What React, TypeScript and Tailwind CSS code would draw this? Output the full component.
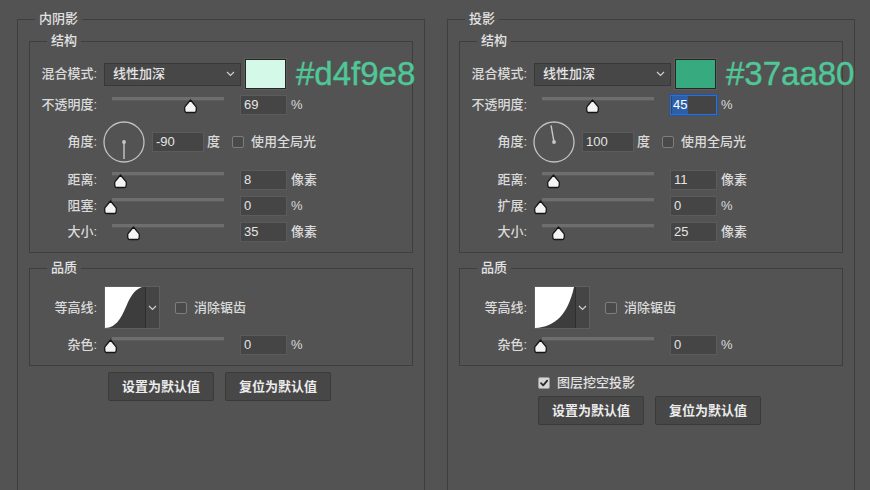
import React from "react";

const FONT = { fontFamily: '"Liberation Sans", "Noto Sans CJK SC", sans-serif' };

function Thumb({ x }: { x: number }) {
  return (
    <svg
      width="15"
      height="15"
      viewBox="0 0 15 15"
      className="absolute top-[4px]"
      style={{ left: x - 7.5 }}
    >
      <path
        d="M7.5 1 L13.2 7.8 Q13.8 13.5 11.5 13.5 L3.5 13.5 Q1.2 13.5 1.8 7.8 Z"
        fill="#f4f4f4"
        stroke="#151515"
        strokeWidth="1.3"
        strokeLinejoin="round"
      />
    </svg>
  );
}

function Slider({ x }: { x: number }) {
  return (
    <div className="relative h-[20px] w-[128px] ml-[7px] shrink-0">
      <div className="absolute left-[8px] top-[2px] h-[4px] w-[112px] bg-[#6e6e6e] border-b border-[#5c5c5c]" />
      <Thumb x={x} />
    </div>
  );
}

function Label({ children }: { children: React.ReactNode }) {
  return (
    <div className="w-[67px] shrink-0 text-right text-[13px] text-[#dadada] leading-[20px] whitespace-nowrap">
      {children}
    </div>
  );
}

function Input({
  value,
  w = 47,
  selected = false,
}: {
  value: string;
  w?: number;
  selected?: boolean;
}) {
  if (selected) {
    return (
      <div
        className="h-[20px] border border-[#2f6fd2] outline outline-1 outline-[#27549a] bg-[#444444] flex items-center pl-[1px]"
        style={{ width: w }}
      >
        <span className="bg-[#2d5fa8] text-white text-[13px] leading-[18px] px-[1px]">
          {value}
        </span>
      </div>
    );
  }
  return (
    <div
      className="h-[20px] border border-[#5b5b5b] bg-[#454545] text-[13px] leading-[18px] text-[#e4e4e4] pl-[3px]"
      style={{ width: w }}
    >
      {value}
    </div>
  );
}

function Unit({ children }: { children: React.ReactNode }) {
  return (
    <div className="ml-[4px] text-[13px] text-[#dadada] leading-[20px] shrink-0">{children}</div>
  );
}

function SliderRow({
  label,
  x,
  value,
  unit,
  selected,
  className = "",
}: {
  label: string;
  x: number;
  value: string;
  unit: string;
  selected?: boolean;
  className?: string;
}) {
  return (
    <div className={`flex items-center h-[20px] ${className}`}>
      <Label>{label}</Label>
      <Slider x={x} />
      <div className="ml-[8px] shrink-0">
        <Input value={value} selected={selected} />
      </div>
      <Unit>{unit}</Unit>
    </div>
  );
}

function Checkbox({ checked = false }: { checked?: boolean }) {
  if (checked) {
    return (
      <div className="w-[12px] h-[12px] rounded-[2px] bg-[#d6d6d6] border border-[#9a9a9a] flex items-center justify-center">
        <svg width="10" height="10" viewBox="0 0 10 10">
          <path
            d="M2 5.2 L4.2 7.4 L8.2 2.6"
            fill="none"
            stroke="#2a2a2a"
            strokeWidth="1.8"
            strokeLinecap="round"
            strokeLinejoin="round"
          />
        </svg>
      </div>
    );
  }
  return (
    <div className="w-[12px] h-[12px] rounded-[2px] bg-[#4a4a4a] border border-[#7d7d7d]" />
  );
}

function Dial({ angle }: { angle: number }) {
  const r = (angle * Math.PI) / 180;
  const x2 = 21 + 17 * Math.cos(r);
  const y2 = 21 - 17 * Math.sin(r);
  return (
    <svg width="42" height="42" viewBox="0 0 42 42" className="ml-[6px] shrink-0">
      <circle cx="21" cy="21" r="20" fill="none" stroke="#c2c2c2" strokeWidth="1.3" />
      <line x1="21" y1="21" x2={x2} y2={y2} stroke="#c8c8c8" strokeWidth="1.4" />
      <circle cx="21" cy="21" r="1.9" fill="#c8c8c8" />
    </svg>
  );
}

function Chevron() {
  return (
    <svg width="9" height="6" viewBox="0 0 9 6">
      <path d="M1 1 L4.5 4.5 L8 1" fill="none" stroke="#cfcfcf" strokeWidth="1.2" />
    </svg>
  );
}

function Contour({ variant }: { variant: "s" | "q" }) {
  const d =
    variant === "s"
      ? "M0 42 C12 42 17 30 22 18 C26 8 31 2 37 0 L0 0 Z"
      : "M0 42 C20 41 33 28 39 0 L0 0 Z";
  return (
    <div className="ml-[7px] flex h-[43px] w-[56px] shrink-0 border border-[#5f5f5f] bg-[#3f3f3f]">
      <svg width="40" height="41" viewBox="0 0 40 42" preserveAspectRatio="none">
        <rect x="0" y="0" width="40" height="42" fill="#3d3d3d" />
        <path d={d} fill="#ffffff" />
      </svg>
      <div className="flex-1 border-l border-[#2f2f2f] bg-[#454545] flex items-center justify-center">
        <Chevron />
      </div>
    </div>
  );
}

function Box({
  title,
  className = "",
  children,
}: {
  title: string;
  className?: string;
  children: React.ReactNode;
}) {
  return (
    <div className={`relative border border-[#3e3e3e] ${className}`}>
      <div className="absolute left-[17px] top-[-11px] bg-[#535353] px-[4px] text-[13px] leading-[20px] text-[#e2e2e2]">
        {title}
      </div>
      {children}
    </div>
  );
}

function Button({ children }: { children: React.ReactNode }) {
  return (
    <div className="w-[106px] h-[29px] rounded-[2px] border border-[#3a3a3a] bg-[#474747] flex items-center justify-center text-[13px] text-[#ececec] font-bold">
      {children}
    </div>
  );
}

type PanelProps = {
  title: string;
  swatch: string;
  hex: string;
  opacity: string;
  opacityX: number;
  opacitySelected?: boolean;
  angle: number;
  angleText: string;
  rows: { label: string; x: number; value: string; unit: string }[];
  contour: "s" | "q";
  knockout?: boolean;
};

function Panel(p: PanelProps) {
  return (
    <Box title={p.title} className="w-[408px] h-[490px] shrink-0">
      <Box title="结构" className="ml-[11px] mt-[21px] w-[384px] pt-[17px] pb-[10px]">
        <div className="flex items-center h-[30px]">
          <Label>混合模式:</Label>
          <div className="ml-[7px] w-[137px] h-[23px] shrink-0 border border-[#383838] bg-[#474747] flex items-center justify-between pl-[8px] pr-[5px] text-[13px] text-[#e6e6e6]">
            <span>线性加深</span>
            <Chevron />
          </div>
          <div
            className="ml-[4px] w-[41px] h-[30px] shrink-0 border border-[#262626] outline outline-1 outline-[#5e5e5e]"
            style={{ backgroundColor: p.swatch }}
          />
          <div className="ml-[10px] shrink-0 text-[33px] leading-[30px] text-[#4fc797] whitespace-nowrap [-webkit-text-stroke:0.4px_#4fc797]">
            {p.hex}
          </div>
        </div>
        <SliderRow
          className="mt-[6px]"
          label="不透明度:"
          x={p.opacityX}
          value={p.opacity}
          unit="%"
          selected={p.opacitySelected}
        />
        <div className="mt-[6px] flex items-center h-[42px]">
          <Label>角度:</Label>
          <Dial angle={p.angle} />
          <div className="ml-[7px] shrink-0">
            <Input value={p.angleText} w={52} />
          </div>
          <div className="ml-[3px] text-[13px] text-[#dadada]">度</div>
          <div className="ml-[12px]">
            <Checkbox />
          </div>
          <div className="ml-[7px] text-[13px] text-[#dadada]">使用全局光</div>
        </div>
        <SliderRow className="mt-[7px]" {...p.rows[0]} />
        <SliderRow className="mt-[6px]" {...p.rows[1]} />
        <SliderRow className="mt-[6px]" {...p.rows[2]} />
      </Box>
      <Box title="品质" className="ml-[11px] mt-[15px] w-[384px] pt-[17px] pb-[10px]">
        <div className="flex items-center h-[43px]">
          <Label>等高线:</Label>
          <Contour variant={p.contour} />
          <div className="ml-[15px]">
            <Checkbox />
          </div>
          <div className="ml-[7px] text-[13px] text-[#dadada]">消除锯齿</div>
        </div>
        <SliderRow className="mt-[6px]" label="杂色:" x={6} value="0" unit="%" />
      </Box>
      {p.knockout ? (
        <div className="ml-[90px] mt-[9px] flex items-center h-[16px]">
          <Checkbox checked />
          <div className="ml-[7px] text-[13px] text-[#e2e2e2]">图层挖空投影</div>
        </div>
      ) : null}
      <div className={`ml-[90px] flex gap-[11px] ${p.knockout ? "mt-[5px]" : "mt-[6px]"}`}>
        <Button>设置为默认值</Button>
        <Button>复位为默认值</Button>
      </div>
    </Box>
  );
}

export default function App() {
  return (
    <div
      className="w-[870px] h-[490px] overflow-hidden bg-[#535353] flex gap-[22px] pl-[17px] pt-[19px] font-medium"
      style={FONT}
    >
      <Panel
        title="内阴影"
        swatch="#d4f9e8"
        hex="#d4f9e8"
        opacity="69"
        opacityX={86}
        angle={-90}
        angleText="-90"
        rows={[
          { label: "距离:", x: 16, value: "8", unit: "像素" },
          { label: "阻塞:", x: 6, value: "0", unit: "%" },
          { label: "大小:", x: 29, value: "35", unit: "像素" },
        ]}
        contour="s"
      />
      <Panel
        title="投影"
        swatch="#37aa80"
        hex="#37aa80"
        opacity="45"
        opacityX={58}
        opacitySelected
        angle={100}
        angleText="100"
        rows={[
          { label: "距离:", x: 19, value: "11", unit: "像素" },
          { label: "扩展:", x: 6, value: "0", unit: "%" },
          { label: "大小:", x: 24, value: "25", unit: "像素" },
        ]}
        contour="q"
        knockout
      />
    </div>
  );
}
